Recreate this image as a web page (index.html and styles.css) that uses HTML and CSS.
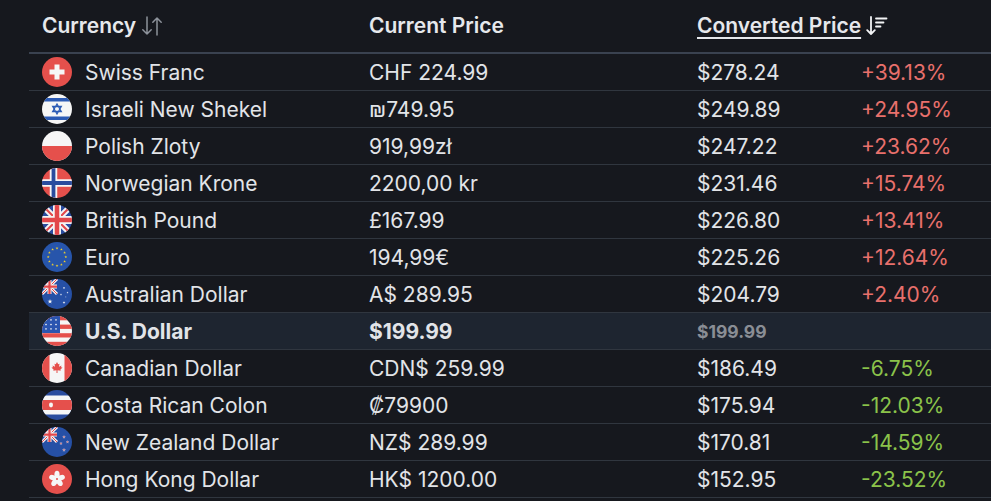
FILE: index.html
```html
<!DOCTYPE html>
<html lang="en">
<head>
<meta charset="utf-8">
<title>Currency prices</title>
<link rel="stylesheet" href="styles.css">
</head>
<body>
<svg class="defs" width="0" height="0" aria-hidden="true">
  <defs>
    <polygon id="st" points="0,-1 0.2245,-0.309 0.951,-0.309 0.363,0.118 0.588,0.809 0,0.382 -0.588,0.809 -0.363,0.118 -0.951,-0.309 -0.2245,-0.309"/>
    <g id="uk">
      <rect width="30" height="30" fill="#2b4c9f"/>
      <path d="M0 0L30 30M30 0L0 30" stroke="#f4f4f4" stroke-width="6"/>
      <path d="M0 0L30 30M30 0L0 30" stroke="#e3474a" stroke-width="2"/>
      <path d="M15 0V30M0 15H30" stroke="#f4f4f4" stroke-width="8"/>
      <path d="M15 0V30M0 15H30" stroke="#e3474a" stroke-width="4.5"/>
    </g>
  </defs>
</svg>
<div class="wrap">
<table class="prices">
  <colgroup><col class="c1"><col class="c2"><col class="c3"><col class="c4"></colgroup>
  <thead>
    <tr>
      <th><span class="hd">Currency
        <svg class="sort" viewBox="0 0 22 20" width="22" height="20"><path d="M6 1V18M1.8 13.8L6 18L10.2 13.8M16 19V2M11.8 6.2L16 2L20.2 6.2" fill="none" stroke="#8d929b" stroke-width="1.5" stroke-linecap="round" stroke-linejoin="round"/></svg></span></th>
      <th>Current Price</th>
      <th colspan="2"><span class="hd"><span class="ul">Converted Price</span>
        <svg class="sort" viewBox="0 0 22 20" width="22" height="20"><path d="M5 1V18M1.2 14.2L5 18L8.8 14.2M10 2.5H20.5M10 6.5H17.5M10 10.5H14.5" fill="none" stroke="#f2f3f5" stroke-width="1.8" stroke-linecap="round" stroke-linejoin="round"/></svg></span></th>
    </tr>
  </thead>
  <tbody>
    <tr>
      <td><div class="cur"><svg class="flag" viewBox="0 0 30 30"><rect width="30" height="30" fill="#e5504c"/><path d="M12.5 7.5H17.5V12.5H22.5V17.5H17.5V22.5H12.5V17.5H7.5V12.5H12.5Z" fill="#f6f6f6"/></svg>Swiss Franc</div></td>
      <td>CHF 224.99</td><td>$278.24</td><td class="up">+39.13%</td>
    </tr>
    <tr>
      <td><div class="cur"><svg class="flag" viewBox="0 0 30 30"><rect width="30" height="30" fill="#f6f6f6"/><rect y="4" width="30" height="3.5" fill="#2c5bb5"/><rect y="22.5" width="30" height="3.5" fill="#2c5bb5"/><path d="M15 10L19.3 17.5H10.7Z M15 20L19.3 12.5H10.7Z" fill="none" stroke="#2c5bb5" stroke-width="1.3"/></svg>Israeli New Shekel</div></td>
      <td>₪749.95</td><td>$249.89</td><td class="up">+24.95%</td>
    </tr>
    <tr>
      <td><div class="cur"><svg class="flag" viewBox="0 0 30 30"><rect width="30" height="30" fill="#f6f6f6"/><rect y="15" width="30" height="15" fill="#e5504c"/></svg>Polish Zloty</div></td>
      <td>919,99zł</td><td>$247.22</td><td class="up">+23.62%</td>
    </tr>
    <tr>
      <td><div class="cur"><svg class="flag" viewBox="0 0 30 30"><rect width="30" height="30" fill="#e5504c"/><path d="M11.5 0V30M0 15H30" stroke="#f6f6f6" stroke-width="7.5"/><path d="M11.5 0V30M0 15H30" stroke="#2a4c9e" stroke-width="3.8"/></svg>Norwegian Krone</div></td>
      <td>2200,00 kr</td><td>$231.46</td><td class="up">+15.74%</td>
    </tr>
    <tr>
      <td><div class="cur"><svg class="flag" viewBox="0 0 30 30"><use href="#uk"/></svg>British Pound</div></td>
      <td>£167.99</td><td>$226.80</td><td class="up">+13.41%</td>
    </tr>
    <tr>
      <td><div class="cur"><svg class="flag" viewBox="0 0 30 30"><rect width="30" height="30" fill="#2755ab"/>
        <g fill="#f3d22b">
          <use href="#st" transform="translate(15 6.2) scale(1.5)"/><use href="#st" transform="translate(19.4 7.4) scale(1.5)"/><use href="#st" transform="translate(22.6 10.6) scale(1.5)"/><use href="#st" transform="translate(23.8 15) scale(1.5)"/><use href="#st" transform="translate(22.6 19.4) scale(1.5)"/><use href="#st" transform="translate(19.4 22.6) scale(1.5)"/><use href="#st" transform="translate(15 23.8) scale(1.5)"/><use href="#st" transform="translate(10.6 22.6) scale(1.5)"/><use href="#st" transform="translate(7.4 19.4) scale(1.5)"/><use href="#st" transform="translate(6.2 15) scale(1.5)"/><use href="#st" transform="translate(7.4 10.6) scale(1.5)"/><use href="#st" transform="translate(10.6 7.4) scale(1.5)"/>
        </g></svg>Euro</div></td>
      <td>194,99€</td><td>$225.26</td><td class="up">+12.64%</td>
    </tr>
    <tr>
      <td><div class="cur"><svg class="flag" viewBox="0 0 30 30"><rect width="30" height="30" fill="#2650a6"/><use href="#uk" transform="scale(0.5)"/>
        <g fill="#f6f6f6"><use href="#st" transform="translate(8 22.5) scale(2.6)"/><use href="#st" transform="translate(22 9) scale(1.3)"/><use href="#st" transform="translate(25.5 13.5) scale(1.1)"/><use href="#st" transform="translate(19 15.5) scale(1.2)"/><use href="#st" transform="translate(22 23.5) scale(1.4)"/><use href="#st" transform="translate(23.8 18) scale(0.7)"/></g></svg>Australian Dollar</div></td>
      <td>A$ 289.95</td><td>$204.79</td><td class="up">+2.40%</td>
    </tr>
    <tr class="base">
      <td><div class="cur"><svg class="flag" viewBox="0 0 30 30"><rect width="30" height="30" fill="#f6f6f6"/><g fill="#e5504c"><rect width="30" height="4.3"/><rect y="8.6" width="30" height="4.3"/><rect y="17.2" width="30" height="4.3"/><rect y="25.8" width="30" height="4.2"/></g><rect width="18" height="17" fill="#2b55b0"/>
        <g fill="#f6f6f6"><use href="#st" transform="translate(4 4) scale(1.3)"/><use href="#st" transform="translate(9 4) scale(1.3)"/><use href="#st" transform="translate(14 4) scale(1.3)"/><use href="#st" transform="translate(4 8.5) scale(1.3)"/><use href="#st" transform="translate(9 8.5) scale(1.3)"/><use href="#st" transform="translate(14 8.5) scale(1.3)"/><use href="#st" transform="translate(4 13) scale(1.3)"/><use href="#st" transform="translate(9 13) scale(1.3)"/><use href="#st" transform="translate(14 13) scale(1.3)"/></g></svg>U.S. Dollar</div></td>
      <td>$199.99</td><td class="same">$199.99</td><td></td>
    </tr>
    <tr>
      <td><div class="cur"><svg class="flag" viewBox="0 0 30 30"><rect width="30" height="30" fill="#f6f6f6"/><rect width="7.5" height="30" fill="#e5504c"/><rect x="22.5" width="7.5" height="30" fill="#e5504c"/><polygon fill="#e5504c" points="15,9 16.2,11.3 17.5,10.8 17,13.7 19.5,12.5 19,14.3 20.5,14.6 18.3,16.8 18.8,17.8 15.5,17.3 15.5,20 14.5,20 14.5,17.3 11.2,17.8 11.7,16.8 9.5,14.6 11,14.3 10.5,12.5 13,13.7 12.5,10.8 13.8,11.3"/></svg>Canadian Dollar</div></td>
      <td>CDN$ 259.99</td><td>$186.49</td><td class="down">-6.75%</td>
    </tr>
    <tr>
      <td><div class="cur"><svg class="flag" viewBox="0 0 30 30"><rect width="30" height="30" fill="#2a4c9e"/><rect y="5.5" width="30" height="19" fill="#f6f6f6"/><rect y="10" width="30" height="10" fill="#e5504c"/><ellipse cx="9" cy="15" rx="2" ry="2.4" fill="#f6f6f6"/></svg>Costa Rican Colon</div></td>
      <td>₡79900</td><td>$175.94</td><td class="down">-12.03%</td>
    </tr>
    <tr>
      <td><div class="cur"><svg class="flag" viewBox="0 0 30 30"><rect width="30" height="30" fill="#2650a6"/><use href="#uk" transform="scale(0.5)"/>
        <g fill="#e3474a" stroke="#f6f6f6" stroke-width="0.25"><use href="#st" transform="translate(22 10) scale(1.4)"/><use href="#st" transform="translate(25.5 15) scale(1.3)"/><use href="#st" transform="translate(19 16.5) scale(1.3)"/><use href="#st" transform="translate(22 23) scale(1.5)"/></g></svg>New Zealand Dollar</div></td>
      <td>NZ$ 289.99</td><td>$170.81</td><td class="down">-14.59%</td>
    </tr>
    <tr>
      <td><div class="cur"><svg class="flag" viewBox="0 0 30 30"><rect width="30" height="30" fill="#e5504c"/><g fill="#f6f6f6"><ellipse cx="15" cy="10.8" rx="2.6" ry="4"/><ellipse cx="15" cy="10.8" rx="2.6" ry="4" transform="rotate(72 15 15)"/><ellipse cx="15" cy="10.8" rx="2.6" ry="4" transform="rotate(144 15 15)"/><ellipse cx="15" cy="10.8" rx="2.6" ry="4" transform="rotate(216 15 15)"/><ellipse cx="15" cy="10.8" rx="2.6" ry="4" transform="rotate(288 15 15)"/></g><circle cx="15" cy="15" r="1" fill="#e5504c"/></svg>Hong Kong Dollar</div></td>
      <td>HK$ 1200.00</td><td>$152.95</td><td class="down">-23.52%</td>
    </tr>
  </tbody>
</table>
</div>
</body>
</html>
```
FILE: styles.css
```css
html, body {
  margin: 0;
  padding: 0;
  background: #16181e;
  overflow: hidden;
}
body {
  font-family: Inter, "Noto Sans", "Liberation Sans", sans-serif;
  color: #e2e4e8;
}
.defs {
  position: absolute;
  width: 0;
  height: 0;
}
.wrap {
  padding-left: 29px;
}
.prices {
  border-collapse: collapse;
  table-layout: fixed;
  width: 980px;
}
.c1 { width: 327px; }
.c2 { width: 328px; }
.c3 { width: 164px; }
.prices th {
  height: 53px;
  padding: 0 0 1px 13px;
  box-sizing: border-box;
  text-align: left;
  font-size: 21px;
  font-weight: 600;
  color: #e6e8ec;
  border-bottom: 2px solid #3a4250;
  vertical-align: middle;
  white-space: nowrap;
}
.hd {
  display: inline-flex;
  align-items: center;
  gap: 5px;
}
.ul {
  text-decoration: underline;
  text-decoration-thickness: 2px;
  text-underline-offset: 4px;
}
.sort {
  display: block;
}
.prices td {
  height: 36px;
  padding: 0 0 0 13px;
  font-size: 21px;
  border-bottom: 1px solid #30363f;
  white-space: nowrap;
  vertical-align: middle;
}
.cur {
  display: flex;
  align-items: center;
  gap: 13px;
}
.flag {
  width: 30px;
  height: 30px;
  border-radius: 50%;
  flex: none;
  display: block;
}
.up { color: #e8706c; }
.down { color: #8bc34a; }
.base td {
  background: #1e2530;
  font-weight: 700;
}
.base .same {
  color: #8a8e95;
  font-size: 17.5px;
}
```
